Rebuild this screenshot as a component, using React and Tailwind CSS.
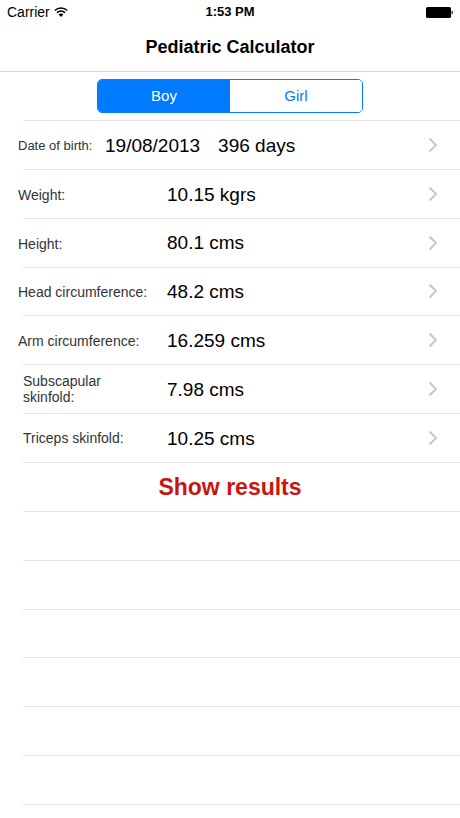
import { useState } from 'react';
import clsx from 'clsx';

const fields = [
  { label: 'Date of birth:', value: '19/08/2013', extra: '396 days' },
  { label: 'Weight:', value: '10.15 kgrs' },
  { label: 'Height:', value: '80.1 cms' },
  { label: 'Head circumference:', value: '48.2 cms' },
  { label: 'Arm circumference:', value: '16.259 cms' },
  { label: 'Subscapular skinfold:', value: '7.98 cms', inset: true },
  { label: 'Triceps skinfold:', value: '10.25 cms', inset: true },
];

const emptyRows = [0, 1, 2, 3, 4, 5];

function WifiIcon() {
  return (
    <svg width="14" height="10" viewBox="0 0 14 10" fill="none" aria-hidden="true">
      <path d="M0.8 3.6C4.2 0.1 9.8 0.1 13.2 3.6" stroke="black" strokeWidth="1.5" />
      <path d="M2.9 5.8C5.2 3.5 8.8 3.5 11.1 5.8" stroke="black" strokeWidth="1.5" />
      <path d="M4.6 7.4C6 6.1 8 6.1 9.4 7.4L7 9.9Z" fill="black" />
    </svg>
  );
}

function BatteryIcon() {
  return (
    <svg width="27" height="11" viewBox="0 0 27 11" aria-hidden="true">
      <rect x="0" y="0" width="25" height="11" rx="1.5" fill="black" />
      <path d="M25.6 3.5C27.2 4 27.2 7 25.6 7.5Z" fill="black" />
    </svg>
  );
}

function Chevron() {
  return (
    <svg width="10" height="16" viewBox="0 0 10 16" fill="none" className="shrink-0" aria-hidden="true">
      <path d="M1.5 1.5L8 8L1.5 14.5" stroke="#c7c7cc" strokeWidth="2" />
    </svg>
  );
}

function StatusBar() {
  return (
    <div className="grid h-6 grid-cols-3 items-center px-[7px]">
      <div className="flex items-center gap-1 text-[14px]">
        Carrier
        <WifiIcon />
      </div>
      <div className="text-center text-[13px] font-bold">1:53 PM</div>
      <div className="flex justify-end">
        <BatteryIcon />
      </div>
    </div>
  );
}

function SexSwitch() {
  const [sex, setSex] = useState('Boy');

  return (
    <div className="flex h-12 items-center justify-center">
      <div
        role="radiogroup"
        aria-label="Sex"
        className="flex h-[34px] w-[266px] overflow-hidden rounded-[5px] border border-[#007aff]"
      >
        {['Boy', 'Girl'].map((option) => (
          <label
            key={option}
            className={clsx(
              'flex flex-1 cursor-pointer items-center justify-center text-[15px]',
              sex === option ? 'bg-[#007aff] text-white' : 'bg-white text-[#007aff]'
            )}
          >
            <input
              type="radio"
              name="sex"
              value={option}
              checked={sex === option}
              onChange={() => setSex(option)}
              className="sr-only"
            />
            {option}
          </label>
        ))}
      </div>
    </div>
  );
}

function Separator() {
  return <div className="ml-[23px] h-px shrink-0 bg-[#e4e4e6]" />;
}

function FieldRow({ label, value, extra, inset }) {
  return (
    <li className="flex flex-col">
      <button type="button" className="flex w-full flex-1 cursor-pointer items-center pl-[18px] pr-[22px] text-left">
        <span
          className={clsx(
            'shrink-0 leading-4 text-[#333]',
            extra ? 'w-[87px] text-[13px]' : 'w-[149px] text-[14px]',
            inset ? 'pl-[5px] pr-8' : 'pt-0.5'
          )}
        >
          {label}
        </span>
        <span className="flex flex-1 gap-[18px] pt-0.5 text-[19px] text-black">
          <span>{value}</span>
          {extra && <span>{extra}</span>}
        </span>
        <Chevron />
      </button>
      <Separator />
    </li>
  );
}

export default function App() {
  return (
    <div className="flex min-h-screen flex-col bg-white font-['Liberation_Sans',Arial,sans-serif] text-black">
      <header className="border-b border-[#d8d8d8]">
        <StatusBar />
        <h1 className="flex h-[47px] items-center justify-center text-[18px] font-bold">Pediatric Calculator</h1>
      </header>

      <main className="flex flex-1 flex-col pb-[13px]">
        <SexSwitch />
        <Separator />
        <ul className="grid flex-1 auto-rows-fr">
          {fields.map((field) => (
            <FieldRow key={field.label} {...field} />
          ))}
          <li className="flex flex-col">
            <button type="button" className="flex-1 cursor-pointer text-[23px] font-bold text-[#c9150f]">
              Show results
            </button>
            <Separator />
          </li>
          {emptyRows.map((row) => (
            <li key={row} className="flex flex-col justify-end" aria-hidden="true">
              <Separator />
            </li>
          ))}
        </ul>
      </main>
    </div>
  );
}
